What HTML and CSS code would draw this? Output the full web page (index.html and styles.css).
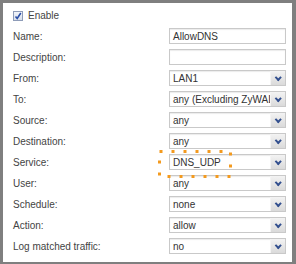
FILE: index.html
```html
<!DOCTYPE html>
<html lang="en">
<head>
    <meta charset="UTF-8">
    <meta name="viewport" content="width=device-width, initial-scale=1.0">
    <link rel="stylesheet" href="styles.css">
    <title>Policy Rule</title>
</head>
<body>
    <div class="panel">
        <!-- Enable checkbox -->
        <label class="enable">
            <span class="check">
                <svg width="8" height="8" viewBox="0 0 8 8"><path d="M1.5 4.5 L3.2 6.5 L6.8 1" fill="none" stroke="#2b4fa8" stroke-width="1.6"/></svg>
            </span>
            Enable
        </label>

        <div class="form">
            <span class="label">Name:</span>
            <div class="field">AllowDNS</div>

            <span class="label">Description:</span>
            <div class="field"></div>

            <span class="label">From:</span>
            <div class="select"><span class="value">LAN1</span><span class="arrow"></span></div>

            <span class="label">To:</span>
            <div class="select"><span class="value">any (Excluding ZyWALL)</span><span class="arrow"></span></div>

            <span class="label">Source:</span>
            <div class="select"><span class="value">any</span><span class="arrow"></span></div>

            <span class="label">Destination:</span>
            <div class="select"><span class="value">any</span><span class="arrow"></span></div>

            <span class="label">Service:</span>
            <div class="select"><span class="value">DNS_UDP</span><span class="arrow"></span></div>

            <span class="label">User:</span>
            <div class="select"><span class="value">any</span><span class="arrow"></span></div>

            <span class="label">Schedule:</span>
            <div class="select"><span class="value">none</span><span class="arrow"></span></div>

            <span class="label">Action:</span>
            <div class="select"><span class="value">allow</span><span class="arrow"></span></div>

            <span class="label">Log matched traffic:</span>
            <div class="select"><span class="value">no</span><span class="arrow"></span></div>
        </div>

        <!-- highlight around the service value -->
        <svg class="highlight" width="76" height="30" viewBox="0 0 76 30">
            <rect x="1.5" y="1.5" width="71" height="25" fill="none" stroke="#f39a1e" stroke-width="3" stroke-dasharray="3 9"/>
        </svg>
    </div>
</body>
</html>
```

FILE: styles.css
```css
body {
    margin: 0;
    font-family: "Liberation Sans", Arial, sans-serif;
    font-size: 10px;
    color: #444444;
}

.panel {
    position: relative;
    width: 296px;
    height: 264px;
    box-sizing: border-box;
    border-style: solid;
    border-color: #7f7f7f;
    border-width: 3px 4px 2px 3px;
    background-color: #ffffff;
    padding: 7px 6px 0 10px;
}

.enable {
    display: flex;
    align-items: center;
    gap: 5px;
    height: 11px;
}

.check {
    display: flex;
    align-items: center;
    justify-content: center;
    width: 8px;
    height: 8px;
    border: 1px solid #8e9cb8;
    background: linear-gradient(#f2f5fa, #d6deea);
}

.form {
    display: grid;
    grid-template-columns: 156px 117px;
    grid-auto-rows: 16px;
    row-gap: 5px;
    margin-top: 7px;
    align-items: center;
}

.label {
    padding-top: 1px;
}

.field, .select {
    height: 16px;
    box-sizing: border-box;
    border: 1px solid #c9c9c9;
    box-shadow: inset 0 1px 1px #ececec;
    background-color: #ffffff;
    color: #333333;
}

.field {
    padding: 2px 3px;
    line-height: 11px;
}

.select {
    display: flex;
}

.value {
    flex: 1;
    padding: 2px 3px;
    line-height: 11px;
    white-space: nowrap;
    overflow: hidden;
}

.arrow {
    width: 14px;
    border-left: 1px solid #f4f4f4;
    background: linear-gradient(#f3f3f3, #dadada) no-repeat;
    position: relative;
}

.arrow::after {
    content: "";
    position: absolute;
    left: 4.5px;
    top: 3.5px;
    width: 2.5px;
    height: 2.5px;
    border-right: 2px solid #33508f;
    border-bottom: 2px solid #33508f;
    transform: rotate(45deg);
}

.highlight {
    position: absolute;
    left: 155px;
    top: 147px;
}
```
